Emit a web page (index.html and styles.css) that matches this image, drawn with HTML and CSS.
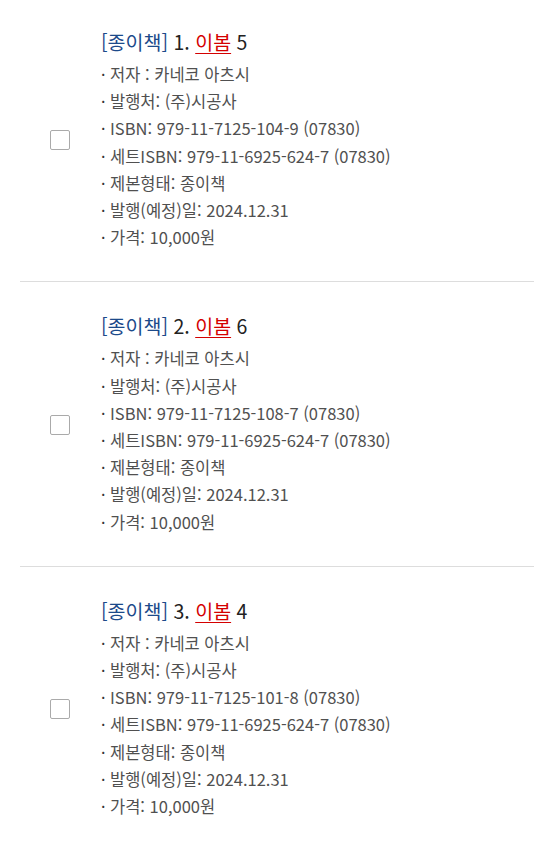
FILE: index.html
```html
<!DOCTYPE html>
<html lang="ko">
<head>
<meta charset="utf-8">
<link rel="stylesheet" href="styles.css">
</head>
<body>
<ul class="list">
  <li class="item">
    <div class="check"><span class="box"></span></div>
    <div class="info">
      <h3 class="title"><span class="type">[종이책]</span> 1. <a class="pub">이봄</a> 5</h3>
      <ul class="meta">
        <li>저자 : 카네코 아츠시</li>
        <li>발행처: (주)시공사</li>
        <li>ISBN: 979-11-7125-104-9 (07830)</li>
        <li>세트ISBN: 979-11-6925-624-7 (07830)</li>
        <li>제본형태: 종이책</li>
        <li>발행(예정)일: 2024.12.31</li>
        <li>가격: 10,000원</li>
      </ul>
    </div>
  </li>
  <li class="item">
    <div class="check"><span class="box"></span></div>
    <div class="info">
      <h3 class="title"><span class="type">[종이책]</span> 2. <a class="pub">이봄</a> 6</h3>
      <ul class="meta">
        <li>저자 : 카네코 아츠시</li>
        <li>발행처: (주)시공사</li>
        <li>ISBN: 979-11-7125-108-7 (07830)</li>
        <li>세트ISBN: 979-11-6925-624-7 (07830)</li>
        <li>제본형태: 종이책</li>
        <li>발행(예정)일: 2024.12.31</li>
        <li>가격: 10,000원</li>
      </ul>
    </div>
  </li>
  <li class="item">
    <div class="check"><span class="box"></span></div>
    <div class="info">
      <h3 class="title"><span class="type">[종이책]</span> 3. <a class="pub">이봄</a> 4</h3>
      <ul class="meta">
        <li>저자 : 카네코 아츠시</li>
        <li>발행처: (주)시공사</li>
        <li>ISBN: 979-11-7125-101-8 (07830)</li>
        <li>세트ISBN: 979-11-6925-624-7 (07830)</li>
        <li>제본형태: 종이책</li>
        <li>발행(예정)일: 2024.12.31</li>
        <li>가격: 10,000원</li>
      </ul>
    </div>
  </li>
</ul>
</body>
</html>
```
FILE: styles.css
```css
html, body {
  margin: 0;
  padding: 0;
  background: #fff;
}
body {
  font-family: "Noto Sans CJK KR", "Noto Sans", sans-serif;
  color: #555;
}
.list {
  list-style: none;
  margin: 0 0 0 20px;
  padding: 0;
}
.item {
  display: flex;
  align-items: center;
  padding: 29px 0 30px;
  border-bottom: 1px solid #ddd;
}
.item + .item {
  padding-top: 31px;
}
.check {
  width: 81px;
  flex: none;
  display: flex;
  padding-left: 30px;
  box-sizing: border-box;
}
.box {
  width: 18px;
  height: 18px;
  border: 1px solid #aaa;
  border-radius: 2px;
  background: #fff;
}
.info {
  flex: 1;
}
.title {
  margin: 0 0 6px;
  font-size: 19.5px;
  font-weight: 400;
  line-height: 26px;
  color: #222;
}
.type {
  color: #1c4a8a;
}
.pub {
  color: #d40000;
  text-decoration: underline;
  text-underline-offset: 3px;
}
.meta {
  list-style: none;
  margin: 0;
  padding: 0;
}
.meta li {
  font-size: 16.5px;
  line-height: 27.2px;
  color: #505050;
}
.meta li::before {
  content: "·";
  color: #333;
  display: inline-block;
  width: 9px;
  font-size: 16px;
}
```
